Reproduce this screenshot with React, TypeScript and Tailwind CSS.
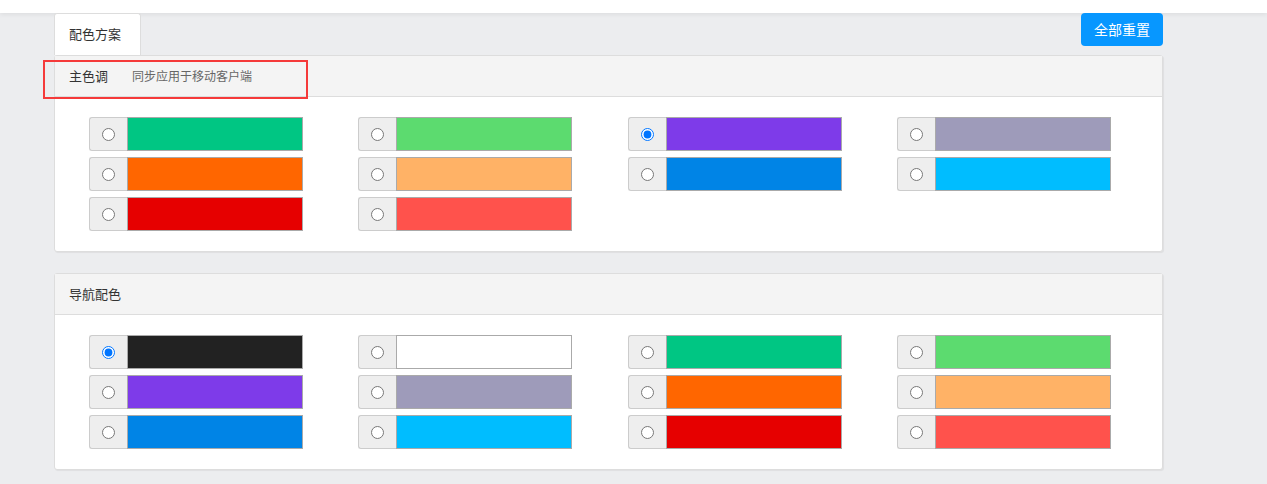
import React from "react";

const PRIMARY = [
  "#00c683", "#5cdb6f", "#7e3be9", "#9e9bba",
  "#ff6600", "#ffb266", "#0084e6", "#00bdff",
  "#e60000", "#ff524c",
];

const NAV = [
  "#222222", "#ffffff", "#00c683", "#5cdb6f",
  "#7e3be9", "#9e9bba", "#ff6600", "#ffb266",
  "#0084e6", "#00bdff", "#e60000", "#ff524c",
];

function Swatch({ color, checked }: { color: string; checked?: boolean }) {
  return (
    <label className="flex h-[34px] w-[214px]">
      <span className="flex w-[38px] items-center justify-center rounded-l-[3px] border border-r-0 border-[#cccccc] bg-[#eeeeee]">
        <input type="radio" readOnly checked={!!checked} className="m-0 h-[13px] w-[13px]" />
      </span>
      <span className="flex-1 border border-[#aaaaaa]" style={{ backgroundColor: color }} />
    </label>
  );
}

function Panel({
  title,
  sub,
  colors,
  selected,
  mark,
}: {
  title: string;
  sub?: string;
  colors: string[];
  selected: number;
  mark?: boolean;
}) {
  return (
    <div className="relative rounded-[3px] border border-[#dddddd] bg-white shadow-[1px_1px_1px_rgba(0,0,0,0.06)]">
      <div className="flex h-[41px] items-center gap-[24px] border-b border-[#dddddd] bg-[#f4f4f4] px-[14px]">
        <span className="text-[13px] text-[#333333]">{title}</span>
        {sub && <span className="text-[12px] text-[#666666]">{sub}</span>}
      </div>
      {mark && (
        <div className="pointer-events-none absolute left-[-12px] top-[4px] h-[39px] w-[265px] border-2 border-[#f53a3a]" />
      )}
      <div className="grid grid-cols-[repeat(4,269.4px)] gap-y-[6px] pb-[20px] pl-[34px] pt-[20px]">
        {colors.map((c, i) => (
          <Swatch key={i} color={c} checked={i === selected} />
        ))}
      </div>
    </div>
  );
}

export default function App() {
  return (
    <div
      className="min-h-[484px] bg-[#ecedef]"
      style={{ fontFamily: '"Microsoft YaHei", "Noto Sans CJK SC", sans-serif' }}
    >
      <div className="h-[13px] bg-white shadow-[0_2px_4px_rgba(0,0,0,0.06)]" />
      <div className="ml-[54px] w-[1109px]">
        <div className="flex items-start justify-between">
          <div className="flex h-[42px] w-[87px] items-center rounded-t-[3px] border border-b-0 border-[#dddddd] bg-white pl-[14px] pb-[1px] text-[13px] text-[#333333]">
            配色方案
          </div>
          <button className="h-[33px] w-[82px] rounded-[4px] bg-[#0797ff] text-[14px] text-white">
            全部重置
          </button>
        </div>
        <Panel title="主色调" sub="同步应用于移动客户端" colors={PRIMARY} selected={2} mark />
        <div className="h-[21px]" />
        <Panel title="导航配色" colors={NAV} selected={0} />
      </div>
    </div>
  );
}
